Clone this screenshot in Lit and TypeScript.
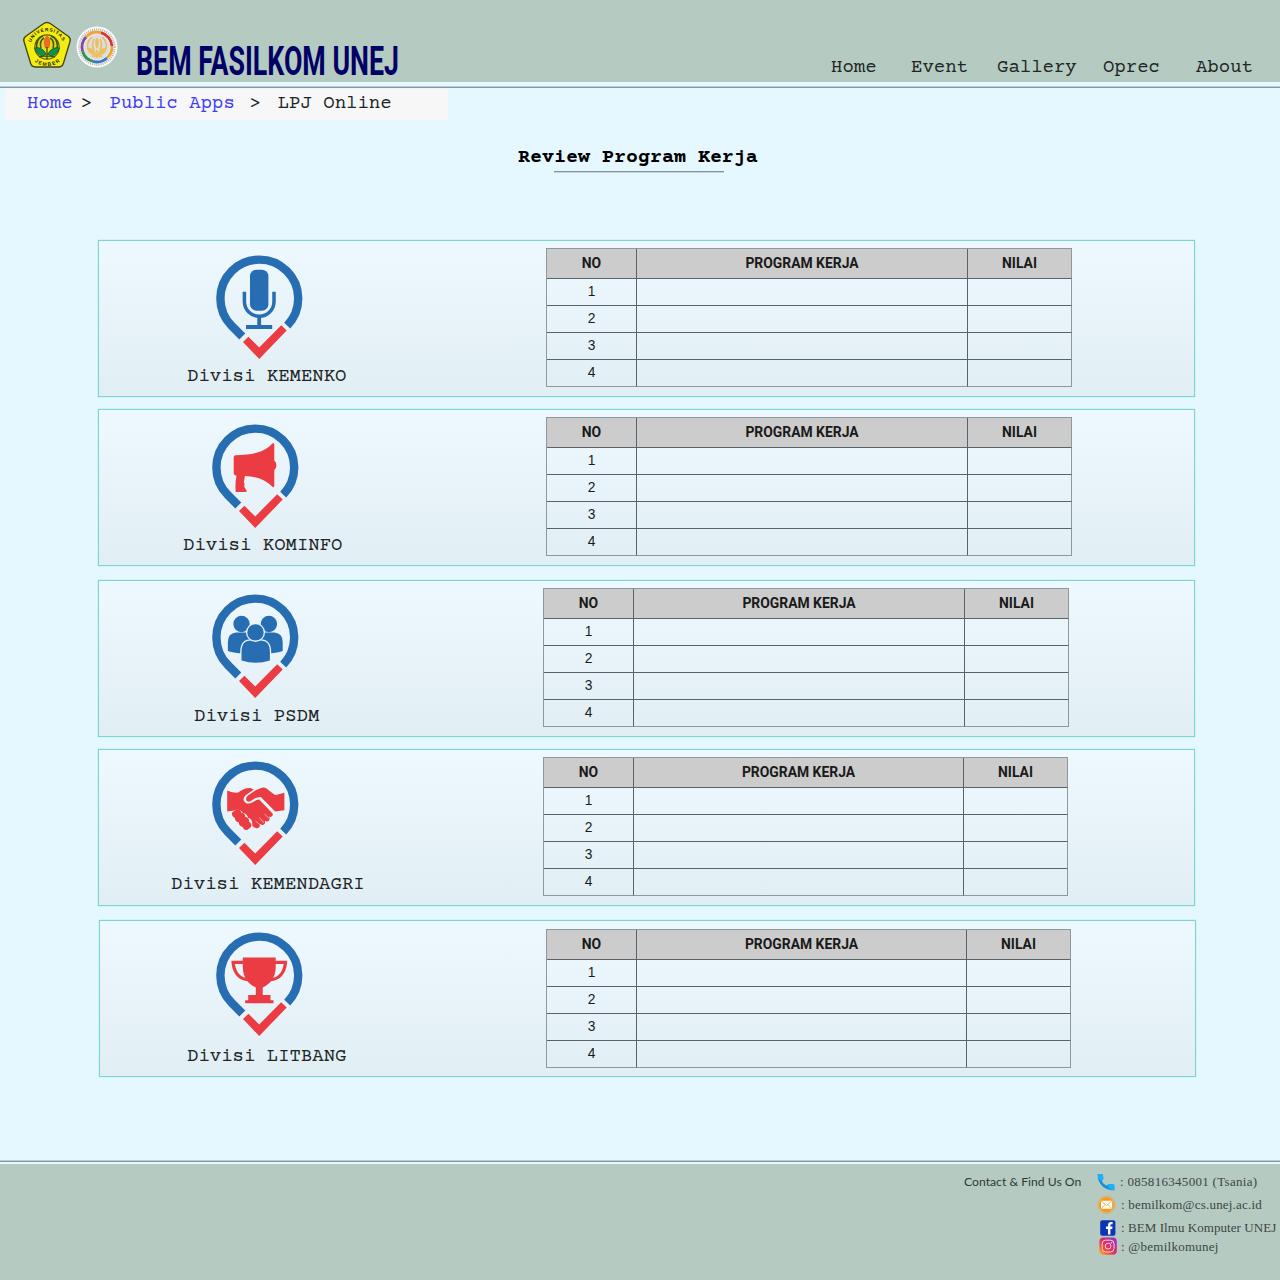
import { LitElement, html, svg, css, SVGTemplateResult } from "lit";
import { customElement, property } from "lit/decorators.js";
import { styleMap } from "lit/directives/style-map.js";

type IconName = "mic" | "megaphone" | "team" | "handshake" | "trophy";

interface Division {
  name: string;
  icon: IconName;
  gap: number;
  indent: number;
  iconX: number;
  iconY: number;
  labelX: number;
  labelY: number;
  tableX: number;
  tableY: number;
  middle: number;
}

const DIVISIONS: Division[] = [
  { name: "KEMENKO", icon: "mic", gap: 0, indent: 0, iconX: 117, iconY: 14, labelX: 88, labelY: 7, tableX: 447, tableY: 7, middle: 331 },
  { name: "KOMINFO", icon: "megaphone", gap: 12, indent: 0, iconX: 112.5, iconY: 14, labelX: 84, labelY: 7, tableX: 447, tableY: 7, middle: 331 },
  { name: "PSDM", icon: "team", gap: 14, indent: 0, iconX: 112.5, iconY: 13, labelX: 95, labelY: 8, tableX: 444, tableY: 7, middle: 331 },
  { name: "KEMENDAGRI", icon: "handshake", gap: 12, indent: 0, iconX: 112.5, iconY: 11, labelX: 72, labelY: 9, tableX: 444, tableY: 7, middle: 330 },
  { name: "LITBANG", icon: "trophy", gap: 14, indent: 1, iconX: 115.5, iconY: 11, labelX: 87, labelY: 10, tableX: 446, tableY: 8, middle: 330 },
];

const RED = "#eb3c44";
const BLUE = "#276db2";

const GLYPHS: Record<IconName, SVGTemplateResult> = {
  mic: svg`
    <rect x="34" y="14.7" width="18.4" height="41" rx="6.5" fill=${BLUE} />
    <path d="M28.4 36.7V46.5A14.8 14.8 0 0 0 58 46.5V36.7" fill="none" stroke=${BLUE} stroke-width="3.5" />
    <path d="M43.2 61V72M30 72H56.2" fill="none" stroke=${BLUE} stroke-width="3.8" />`,
  megaphone: svg`
    <path transform="translate(.5 0)" fill=${RED} d="M23 31.2C31 30.8 38 30.6 44 28.8C51 26.7 56 23.8 60 19.4Q61.8 18.2 61.8 20.5V36.8Q63.9 38 63.9 41.5Q63.9 45 61.8 46V61.8Q61.6 64 59.8 62.8C54 56.5 45 52.6 32.4 52L31.4 58.5Q32.6 60 31.6 61.6Q32 64.5 34 66.2V68H23.2Q22.4 59 24 51.4H23Q21.2 51.2 21.2 49V33.2Q21.2 31.4 23 31.2Z" />`,
  team: svg`
    <g fill=${BLUE} transform="translate(.5 0)">
      <circle cx="29" cy="30" r="8.2" /><circle cx="56.4" cy="30" r="8.2" />
      <path d="M15.4 57V48Q15.4 39.6 23.5 38.6H36L41 47L34 59.4Q22 59.6 15.4 57Z" />
      <path d="M70.2 57V48Q70.2 39.6 62 38.6H49.5L45 47L52 59.4Q64 59.6 70.2 57Z" />
      <path d="M29 66.4V58Q29 46.6 38.5 46.6H47.8Q57.4 46.6 57.4 58V66.4Q43 71 29 66.4Z" stroke="#e9f4fa" stroke-width="2.6" paint-order="stroke" />
      <circle cx="43" cy="38.4" r="8.2" stroke="#ebf6fc" stroke-width="2.6" paint-order="stroke" />
    </g>`,
  handshake: svg`
    <g transform="translate(.6 0)">
      <path fill=${RED} d="M14.6 29.6Q20 32.4 25.6 31.4C29 29 34 26.6 38.4 27.2L41.2 28.4L33 34.2Q30 37 31.4 40C33 43 37 43.6 41 40.8Q43.5 38.7 46.6 38.6L59.8 52.2Q61.3 55 58 56L56.6 55.6Q58.3 59 55.2 60.4Q53.5 60.8 52.2 59.4Q53.4 63 50.5 64Q48.8 64.3 47.4 62.8Q47.8 67.5 43.8 67.3Q41 66.7 39.6 64.4Q40.4 58 35.5 56.8Q34.6 52.5 30.2 52Q27 46.3 21.4 49.6L14.6 50.4Z" />
      <path d="M52 53L57 58M46.5 56.5L51.5 61.8M43 60L47.6 64" stroke="#e8f4fa" stroke-width=".6" />
      <path fill=${RED} d="M71.8 31.7L63.4 34.1Q61.5 33.9 60 32.2L53.6 27.3Q51.4 25.8 48.6 27L43.5 29L35.3 34.6Q32.6 37 33.8 39.4Q35.8 42 39 39.6Q43 36 48.2 36.1L62.6 50.4L71.8 49.3Z" />
      <g stroke=${RED} stroke-linecap="round" stroke-width="7">
        <path d="M23 53.2L25 51.8M26 57.6L29 55.4M29.8 62L33 59.8M33.6 65.4L35.2 64.2" />
      </g>
    </g>`,
  trophy: svg`
    <g transform="translate(.5 0)">
      <path fill=${RED} d="M26.3 25.6H59.2V36C58.8 45.5 54 51.8 46.2 55.4V63H54V68.3H57V71.2H28.7V68.3H31.7V63H39.3V55.4C31.5 51.8 26.8 45.5 26.3 36Z" />
      <path fill="none" stroke=${RED} stroke-width="3.2" d="M27 30.3H16.6C17.2 38.5 21.5 47.8 32.5 47.6M58.5 30.3H69C68.4 38.5 64.1 47.8 53 47.6" />
    </g>`,
};

@customElement("division-badge")
class DivisionBadge extends LitElement {
  @property() icon: IconName = "mic";

  static styles = css`
    :host { display: block; width: 86px; height: 104px; }
    .pin { display: block; overflow: visible; }
  `;

  render() {
    return html`
      <svg class="pin" width="86" height="104" viewBox="0 0 86 104">
        <path d="M26.3 81.5L15.6 70.8A38.9 38.9 0 1 1 71.2 70.6" fill="none" stroke=${BLUE} stroke-width="8.4" />
        <path d="M27 87L32.4 81.7L43.2 92.4L65.2 70.3L70.7 75.6L43.2 104Z" fill=${RED} />
        ${GLYPHS[this.icon]}
      </svg>
    `;
  }
}

@customElement("program-table")
class ProgramTable extends LitElement {
  @property({ type: Number }) middle = 331;

  static styles = css`
    :host { display: block; }
    .grid {
      display: grid;
      grid-template-rows: 30px repeat(4, 27px);
      width: max-content;
      border-top: 1px solid #8f989c;
      border-left: 1px solid #8f989c;
      font: 13.8px/25px "Liberation Sans", sans-serif;
      color: #1a1a1a;
      text-align: center;
    }
    .cell { border-right: 1px solid #59636a; border-bottom: 1px solid #59636a; }
    .cell:nth-child(3n) { border-right-color: #8f989c; }
    .cell:nth-last-child(-n + 3) { border-bottom-color: #8f989c; }
    .head { background: #ccc; font: bold 13.9px/28px Roboto, "Liberation Sans", sans-serif; }
  `;

  render() {
    const columns = { gridTemplateColumns: `90px ${this.middle}px 104px` };
    return html`
      <div class="grid" style=${styleMap(columns)}>
        ${["NO", "PROGRAM KERJA", "NILAI"].map((t) => html`<div class="cell head">${t}</div>`)}
        ${[1, 2, 3, 4].map((n) => html`<div class="cell">${n}</div><div class="cell"></div><div class="cell"></div>`)}
      </div>
    `;
  }
}

@customElement("app-root")
class AppRoot extends LitElement {
  static styles = css`
    :host {
      display: flex;
      flex-direction: column;
      width: 1280px;
      height: 1280px;
      overflow: hidden;
      background: #e6f8ff;
      color: #222525;
      font: 19px/22px "Courier Prime", "Nimbus Mono PS", FreeMono, "Courier New", "Liberation Mono", monospace;
    }
    .header {
      display: flex;
      align-items: flex-start;
      height: 82px;
      background: #b5cac1;
      flex: none;
    }
    .seal { margin: 21px 0 0 22px; }
    .ring { margin: 26px 0 0 4px; }
    .brand { margin: 36px 0 0 16px; overflow: visible; }
    .wordmark { font: bold 40px Roboto, "Liberation Sans Narrow", sans-serif; fill: #000066; }
    .nav {
      display: grid;
      grid-template-columns: 80px 86px 106px 93px 58px;
      margin: 57px 26px 0 auto;
    }
    .rule { height: 5px; flex: none; border-bottom: 1px solid #8b959e; box-shadow: inset 0 -1px #bccbd3; }
    .crumbs {
      display: flex;
      flex: none;
      width: 443px;
      height: 31px;
      margin: 1px 0 0 5px;
      padding-left: 22px;
      box-sizing: border-box;
      background: #f7f7f7;
      line-height: 30px;
      white-space: pre;
    }
    .link { color: #4040f0; }
    .sep1 { margin: 0 17.5px 0 8px; }
    .sep2 { margin: 0 17px 0 14.5px; }
    .title {
      margin: 26px auto 0 518px;
      font-size: 20px;
      font-weight: bold;
      line-height: 24px;
      color: #000;
    }
    .underline { width: 170px; height: 1px; margin: 1px 0 0 554px; background: #87919a; box-shadow: 0 1px #c4d2da; flex: none; }
    .list { display: flex; flex-direction: column; margin: 68px 0 0 98px; flex: none; }
    .card {
      display: grid;
      grid-template-columns: 444px 1fr;
      width: 1097px;
      height: 157px;
      box-sizing: border-box;
      border: 1px solid #7bd5d5;
      box-shadow: 0 0 1px #7bd5d5;
      background: linear-gradient(#eef9ff, #e1eef4);
    }
    .who { display: flex; flex-direction: column; width: 360px; height: 155px; }
    .label { white-space: nowrap; }
    .footer-rule { height: 2px; margin-top: auto; border-top: 1px solid #8b959e; box-shadow: 0 -1px #bccbd3; flex: none; }
    .footer {
      display: flex;
      flex: none;
      height: 116px;
      box-sizing: border-box;
      padding: 8px 0 0 964px;
      background: #b5cac1;
      color: #3c4745;
    }
    .contact { width: 133px; font: 12.2px/20px Lato, sans-serif; white-space: nowrap; color: #2f3a38; }
    .channels {
      display: grid;
      grid-template-columns: 23px auto;
      grid-template-rows: 22px 23px 20px 20px;
      font: 13px/20px "Liberation Serif", serif;
      white-space: nowrap;
    }
    .ico { display: block; }
    .lower { padding-top: 1px; }
    .shift { padding-left: 1px; }
    .phone { letter-spacing: .3px; }
    .mail { letter-spacing: .2px; }
    .page { letter-spacing: .06px; }
    .insta { letter-spacing: .25px; }
  `;

  private seal() {
    return html`
      <svg class="seal" width="50" height="48" viewBox="0 0 50 48">
        <path d="M25 1.3Q27 1.4 29 3L46.5 15.5Q49 17.5 48 20.5L41.5 42Q40.5 45.6 37 46H13Q9.5 45.6 8.5 42L2 20.5Q1 17.5 3.5 15.5L21 3Q23 1.4 25 1.3Z" fill="#f4ed10" stroke="#3f4412" stroke-width="1.3" />
        <circle cx="25" cy="26" r="12.2" fill="#e5dc13" stroke="#5d5c13" stroke-width="1.2" />
        <path d="M15 29Q13 18 21 15M35 29Q37 18 29 15M19 27Q17 20 22 17M31 27Q33 20 28 17" fill="none" stroke="#3b5718" stroke-width="1.5" />
        <path d="M25 14Q30 19 27.2 27H22.8Q20 19 25 14Z" fill="#ec6b24" />
        <path d="M12.5 27Q20 25 24.5 33.5Q17 38 12.5 27ZM37.5 27Q30 25 25.5 33.5Q33 38 37.5 27Z" fill="#0d9348" stroke="#155326" stroke-width=".7" />
        <path d="M25 26V38M17 36Q25 34 33 36" fill="none" stroke="#33440f" stroke-width="1.2" />
        <path id="sealTop" d="M9 21.5A17 17 0 0 1 41 21.5" fill="none" />
        <path id="sealBottom" d="M10.5 38.5A20 20 0 0 0 40 38.5" fill="none" />
        <text font-family="Liberation Sans, sans-serif" font-weight="bold" font-size="4.8" textLength="40" fill="#24250c"><textPath href="#sealTop" textLength="40">UNIVERSITAS</textPath></text>
        <text font-family="Liberation Sans, sans-serif" font-weight="bold" font-size="5" textLength="27" fill="#24250c"><textPath href="#sealBottom" startOffset="3" textLength="27">JEMBER</textPath></text>
      </svg>
    `;
  }

  private ring() {
    return html`
      <svg class="ring" width="42" height="42" viewBox="0 0 42 42">
        <circle cx="21" cy="21" r="20.5" fill="#fbfbfb" />
        <circle cx="21" cy="21" r="17.7" fill="none" stroke="#8f9294" stroke-width="2.2" stroke-dasharray="1.1 1" opacity=".65" />
        <circle cx="21" cy="21" r="14.6" fill="#e8e7ea" />
        <g fill="none" stroke-width="2.8">
          <path d="M10 11A15 15 0 0 1 25 6.6" stroke="#f0a33a" />
          <path d="M25 6.6A15 15 0 0 1 36 20" stroke="#d6372f" />
          <path d="M36 20A15 15 0 0 1 31 32" stroke="#eea62d" />
          <path d="M31 32A15 15 0 0 1 17 35.4" stroke="#3978c2" />
          <path d="M17 35.4A15 15 0 0 1 6.5 25" stroke="#379252" />
          <path d="M6.5 25A15 15 0 0 1 10 11" stroke="#84479c" />
        </g>
        <circle cx="21" cy="21" r="12.3" fill="#dddce0" />
        <g fill="none" stroke="#ebbd4e" stroke-width="1.5">
          <path d="M16 11Q9 17 13 25M26 11Q33 17 29 25M18 13Q15 19 18 24M24 13Q27 19 24 24" />
          <path d="M21 24V32M16 30H26" />
        </g>
        <path d="M21 11Q25 17 21 23Q17 17 21 11ZM11 22Q19 21 20.5 29Q13 30 11 22ZM31 22Q23 21 21.5 29Q29 30 31 22Z" fill="#ecc05a" />
      </svg>
    `;
  }

  private card(d: Division) {
    const card = { marginTop: `${d.gap}px`, marginLeft: `${d.indent}px` };
    const badge = { marginLeft: `${d.iconX}px`, marginTop: `${d.iconY}px` };
    const label = { marginLeft: `${d.labelX}px`, marginTop: `${d.labelY}px` };
    const table = { marginLeft: `${d.tableX - 444}px`, marginTop: `${d.tableY}px` };
    return html`
      <section class="card" style=${styleMap(card)}>
        <div class="who">
          <division-badge icon=${d.icon} style=${styleMap(badge)}></division-badge>
          <div class="label" style=${styleMap(label)}>Divisi ${d.name}</div>
        </div>
        <program-table middle=${d.middle} style=${styleMap(table)}></program-table>
      </section>
    `;
  }

  render() {
    return html`
      <header class="header">
        ${this.seal()}${this.ring()}
        <svg class="brand" width="270" height="46" viewBox="0 0 270 46">
          <text class="wordmark" x="2" y="39" textLength="263" lengthAdjust="spacingAndGlyphs">BEM FASILKOM UNEJ</text>
        </svg>
        <nav class="nav">
          ${["Home", "Event", "Gallery", "Oprec", "About"].map((t) => html`<span>${t}</span>`)}
        </nav>
      </header>
      <div class="rule"></div>
      <div class="crumbs"><span class="link">Home</span><span class="sep1">&gt;</span><span class="link">Public Apps</span><span class="sep2">&gt;</span><span>LPJ Online</span></div>
      <div class="title">Review Program Kerja</div>
      <div class="underline"></div>
      <main class="list">${DIVISIONS.map((d) => this.card(d))}</main>
      <div class="footer-rule"></div>
      <footer class="footer">
        <div class="contact">Contact &amp; Find Us On</div>
        <div class="channels">
          <svg class="ico" width="18" height="20" viewBox="0 0 18 20">
            <path d="M.8 2H5.4Q6.4 5 6.3 7.2L4.8 9Q6 12.2 9.8 13.6L11.8 12Q14.5 11.8 17.3 12.8V18.2Q11 18.8 6 14.8Q.2 9.8.8 2Z" fill="#1791e0" />
            <path d="M.8 2H5.4Q6.4 5 6.3 7.2L3.3 8.8L.8 5ZM11.8 12Q14.5 11.8 17.3 12.8V18.2L13.5 17.5L10.6 14Z" fill="#1cb2fb" />
          </svg>
          <div class="phone">: 085816345001 (Tsania)</div>
          <svg class="ico" width="19" height="22" viewBox="0 0 19 22">
            <circle cx="9.5" cy="10.7" r="8.6" fill="none" stroke="#f6a23b" stroke-width=".9" />
            <circle cx="9.5" cy="10.7" r="7.5" fill="#f8981f" />
            <rect x="4" y="6.8" width="11.2" height="8" rx="1" fill="#fff" />
            <path d="M4.4 7.2L9.6 11.4L14.8 7.2M4.4 14.4L8 10.8M14.8 14.4L11.2 10.8" fill="none" stroke="#f8981f" stroke-width=".8" />
          </svg>
          <div class="shift lower mail">: bemilkom@cs.unej.ac.id</div>
          <svg class="ico" width="20" height="20" viewBox="0 0 20 20">
            <rect x="3.2" y="3.2" width="15.2" height="15.6" rx="2" fill="#0b36b8" />
            <path d="M11 17.5V12H9V9.6H11V8Q11 4.9 14 4.9H15.6V7.2H14.5Q13.4 7.2 13.4 8.3V9.6H15.5L15.2 12H13.4V17.5Z" fill="#fff" />
          </svg>
          <div class="shift lower page">: BEM Ilmu Komputer UNEJ</div>
          <svg class="ico" width="21" height="20" viewBox="0 0 21 20">
            <defs>
              <linearGradient id="insta" x1="0" y1="1" x2="1" y2="0">
                <stop offset="0" stop-color="#fdc33c" /><stop offset=".28" stop-color="#f5552c" />
                <stop offset=".55" stop-color="#dd2773" /><stop offset="1" stop-color="#7b3fc9" />
              </linearGradient>
            </defs>
            <rect x="2.4" y="0.4" width="17.4" height="17.4" rx="4" fill="url(#insta)" />
            <rect x="5.2" y="3.2" width="11.8" height="11.8" rx="3.4" fill="none" stroke="#f3d6e4" stroke-width="1" />
            <circle cx="11.1" cy="9.1" r="2.9" fill="none" stroke="#f3d6e4" stroke-width="1" />
            <circle cx="14.6" cy="5.7" r=".8" fill="#f3d6e4" />
          </svg>
          <div class="shift insta">: @bemilkomunej</div>
        </div>
      </footer>
    `;
  }
}
